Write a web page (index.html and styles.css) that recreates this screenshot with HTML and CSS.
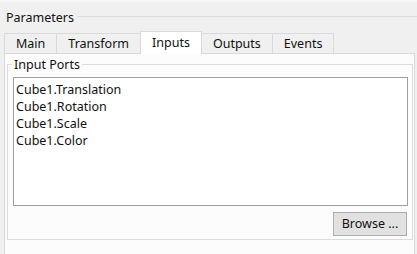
FILE: index.html
```html
<!DOCTYPE html>
<html lang="en">
<head>
    <meta charset="UTF-8">
    <title>Parameters</title>
    <link rel="stylesheet" href="styles.css">
</head>
<body>
    <div class="panel">
        <div class="panel-title">
            <span>Parameters</span>
            <div class="rule"></div>
        </div>

        <div class="tabs">
            <div class="tab">Main</div>
            <div class="tab">Transform</div>
            <div class="tab active">Inputs</div>
            <div class="tab">Outputs</div>
            <div class="tab">Events</div>
        </div>

        <div class="pane">
            <fieldset class="group">
                <legend>Input Ports</legend>
                <ul class="list">
                    <li>Cube1.Translation</li>
                    <li>Cube1.Rotation</li>
                    <li>Cube1.Scale</li>
                    <li>Cube1.Color</li>
                </ul>
                <div class="actions">
                    <button>Browse ...</button>
                </div>
            </fieldset>
        </div>
    </div>
</body>
</html>
```

FILE: styles.css
```css
html, body {
    height: 100%;
}
body {
    margin: 0;
    background-color: #f0f0f0;
    font-family: "Noto Sans", Arial, sans-serif;
    font-size: 12.5px;
    line-height: 17px;
    color: #111;
}
.panel {
    box-sizing: border-box;
    height: 100%;
    display: flex;
    flex-direction: column;
    border-top: 2px solid #f7f7f7;
}

/* group title with the line running to the right */
.panel-title {
    display: flex;
    align-items: flex-start;
    padding: 7px 0 0 6px;
}
.panel-title .rule {
    flex: 1;
    margin: 7px 0 0 3px;
    border-top: 1px solid #dcdcdc;
}

/* tabs */
.tabs {
    display: flex;
    align-items: flex-end;
    height: 22px;
    margin: 5px 0 0 4px;
    position: relative;
    z-index: 1;
}
.tab {
    box-sizing: border-box;
    height: 20px;
    line-height: 19px;
    padding: 0 11px;
    margin-right: -1px;
    background: #f0f0f0;
    border: 1px solid #dadada;
    border-bottom: none;
}
.tab.active {
    height: 23px;
    line-height: 21px;
    margin-bottom: -1px;
    background: #fff;
    position: relative;
    z-index: 1;
}

/* tab page, its bottom edge is cut off by the window */
.pane {
    flex: 1;
    margin: 0 2px 0 4px;
    padding: 0 1px 0 2px;
    background: #fcfcfc;
    border: 1px solid #dadada;
    border-bottom: none;
}
.group {
    margin: 2px 0 0 0;
    padding: 4px 4px 3px 5px;
    border: 1px solid #dcdcdc;
}
.group legend {
    margin-left: -1px;
    padding: 0 2px;
    line-height: 17px;
}
.list {
    list-style: none;
    margin: 0;
    padding: 3px 2px 0;
    height: 124px;
    background: #fff;
    border: 1px solid #a0a0a0;
}
.actions {
    display: flex;
    justify-content: flex-end;
    margin-top: 6px;
    padding-right: 1px;
}
button {
    box-sizing: border-box;
    height: 24px;
    width: 74px;
    padding: 0 6px;
    font-family: inherit;
    font-size: 12.5px;
    line-height: 22px;
    color: #111;
    background: #e1e1e1;
    border: 1px solid #adadad;
    border-radius: 0;
}
```
